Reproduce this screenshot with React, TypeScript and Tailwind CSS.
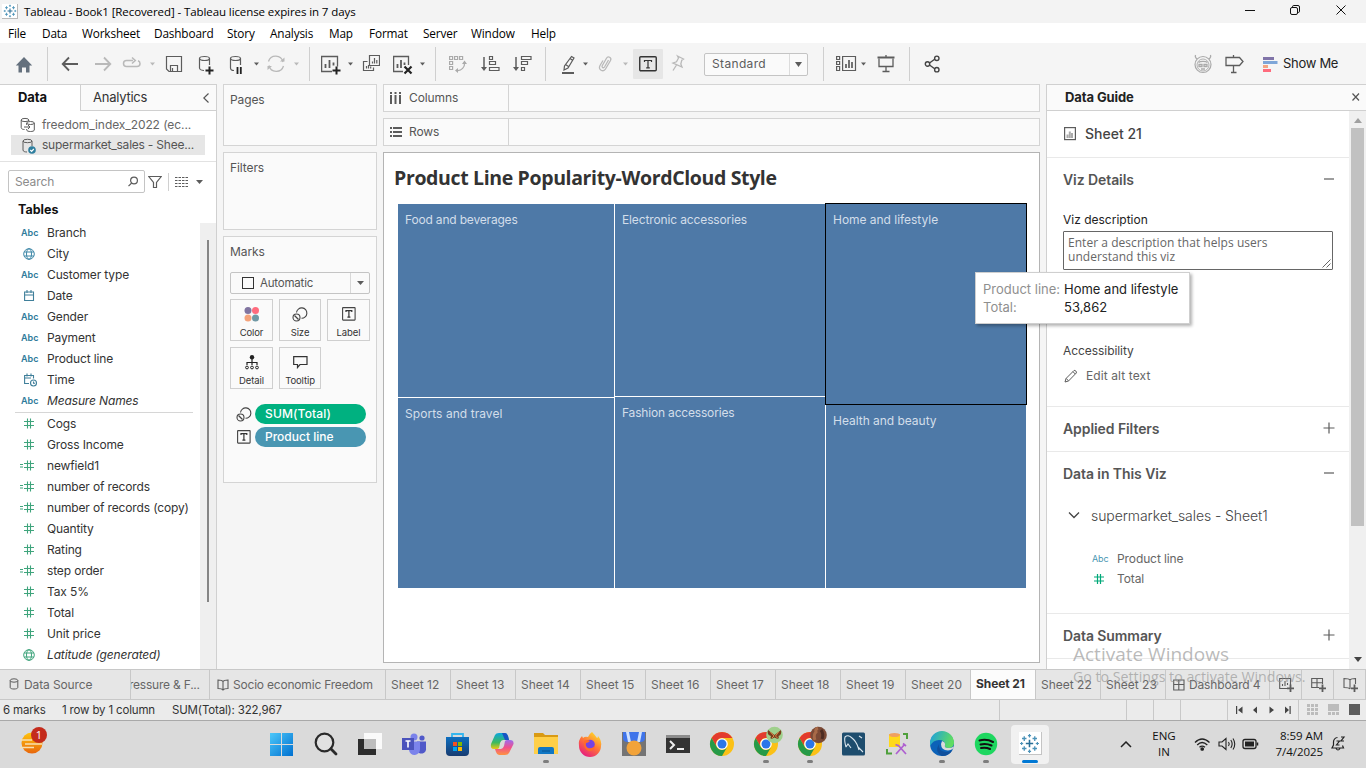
import React from "react";

const SEGOE = "font-['Open_Sans','Noto_Sans',sans-serif]";

function Svg({ w, h = 24, c = "", children }: { w: number; h?: number; c?: string; children: React.ReactNode }) {
  return (
    <svg width={w} height={h} viewBox={`0 0 ${w} ${h}`} className={`shrink-0 ${c}`} fill="none" stroke="#5c5c5c" strokeWidth={1.2}>
      {children}
    </svg>
  );
}

function Caret({ c, color = "#5c5c5c" }: { c: string; color?: string }) {
  return (
    <svg width="5" height="4" viewBox="0 0 5 4" className={`shrink-0 ${c}`}>
      <path d="M0 0.5H5L2.5 3.5Z" fill={color} />
    </svg>
  );
}

const Sep = ({ c }: { c: string }) => <div className={`h-[34px] w-px shrink-0 bg-[#cfcfcf] ${c}`} />;

function Spark({ size }: { size: number }) {
  return (
    <svg width={size} height={size} viewBox="0 0 16 16" className="shrink-0" fill="none" stroke="#4b92b8" strokeWidth="1">
      <path d="M8 5.2V10.8M5.2 8H10.8" stroke="#2a6f97" strokeWidth="1.2" />
      <path d="M4 2.5V6M2.3 4.2H5.7M12 2.5V6M10.3 4.2H13.7M4 10V13.5M2.3 11.8H5.7M12 10V13.5M10.3 11.8H13.7" />
      <path d="M8 .8V3.4M6.8 2H9.2M8 12.6V15.2M6.8 14H9.2M.8 8H3.2M2 6.8V9.2M12.8 8H15.2M14 6.8V9.2" strokeWidth=".9" />
    </svg>
  );
}

function TitleBar() {
  return (
    <div className={`flex h-[23px] shrink-0 items-center bg-[#f3f3f3] ${SEGOE}`}>
      <div className="ml-[2px] flex h-[15px] w-[16px] items-center justify-center border-r border-b border-[#b9b9b9] bg-white">
        <Spark size={14} />
      </div>
      <span className="ml-[6px] text-[11.5px] tracking-[-0.09px] text-black">Tableau - Book1 [Recovered] - Tableau license expires in 7 days</span>
      <svg width="106" height="12" viewBox="0 0 106 12" className="mr-[15px] ml-auto -mt-[3px]" fill="none" stroke="#111">
        <path d="M0 6.5H10" />
        <rect x="45.5" y="3.5" width="7" height="7" rx="1.5" />
        <path d="M47.5 3V2.8A1.3 1.3 0 0 1 48.8 1.5H53A1.5 1.5 0 0 1 54.5 3V7.2A1.3 1.3 0 0 1 53.2 8.5" />
        <path d="M91.5 1.5L100.5 10.5M100.5 1.5L91.5 10.5" />
      </svg>
    </div>
  );
}

const MENUS: [string, string][] = [
  ["File", "w-[34px]"], ["Data", "w-[40px]"], ["Worksheet", "w-[72px]"], ["Dashboard", "w-[73px]"], ["Story", "w-[43px]"],
  ["Analysis", "w-[59px]"], ["Map", "w-[40px]"], ["Format", "w-[54px]"], ["Server", "w-[48px]"], ["Window", "w-[60px]"], ["Help", "w-[40px]"],
];

function MenuBar() {
  return (
    <div className={`flex h-[20px] shrink-0 items-center bg-white pt-[2px] pl-[8px] text-[11.8px] tracking-[-0.15px] text-black ${SEGOE}`}>
      {MENUS.map(([m, w]) => (
        <span key={m} className={`${w} shrink-0 whitespace-nowrap`}>{m}</span>
      ))}
    </div>
  );
}

function Toolbar() {
  const lite = "#b9b9b9";
  return (
    <div className="flex h-[41px] shrink-0 items-center bg-[#f5f5f5] pt-px">
      <Svg w={20} c="ml-[14px]">
        <path d="M10 5L1.8 13.5H4.5V20.5H8V15.5H12V20.5H15.5V13.5H18.2Z" fill="#64707d" stroke="none" />
      </Svg>
      <Sep c="ml-[13px]" />
      <Svg w={18} c="ml-[13px]"><path d="M17 12H2M8 5.500L1.700 12L8 18.500" strokeWidth="1.800" /></Svg>
      <Svg w={18} c="ml-[15px]"><path d="M1 12H16M10 5.500L16.300 12L10 18.500" stroke={lite} strokeWidth="1.800" /></Svg>
      <Svg w={20} c="ml-[10px]">
        <path d="M11 8.500H4.500A3 3 0 0 0 1.500 11.500A3 3 0 0 0 4.500 14.500H15A3 3 0 0 0 18 11.500A3 3 0 0 0 16 8.700M10 5.500L13.300 8.500L10 11.500" stroke={lite} strokeWidth="1.500" />
      </Svg>
      <Caret c="ml-[8px]" color={lite} />
      <Svg w={18} c="ml-[10px]">
        <path d="M1.500 4.500H16.500V19.500H4L1.500 17ZM5.500 19V13.500H12.500V19M7.500 16V19" />
      </Svg>
      <Svg w={18} c="ml-[15px]">
        <ellipse cx="6.500" cy="6.500" rx="5" ry="2" />
        <path d="M1.500 6.500V16C1.500 17.500 4 18.500 6 18.500M11.500 6.500V13" />
        <path d="M11.500 14.500V22.500M7.500 18.500H15.500" stroke="#222" strokeWidth="2" />
      </Svg>
      <Svg w={18} c="ml-[13px]">
        <ellipse cx="6.500" cy="6.500" rx="5" ry="2" />
        <path d="M1.500 6.500V16C1.500 17.500 3 18.500 5 18.500M11.500 6.500V13" />
        <path d="M8.500 15V22M11.800 15V22" stroke="#222" strokeWidth="1.800" />
      </Svg>
      <Caret c="ml-[7px]" />
      <Svg w={20} c="ml-[7px]">
        <path d="M2.500 9.500A7.500 7.500 0 0 1 17 10M17.500 14A7.500 7.500 0 0 1 3 13.500" stroke={lite} strokeWidth="1.300" />
        <path d="M14 9.500H18.500V5.500ZM6 14H1.500V18Z" fill={lite} stroke="none" />
      </Svg>
      <Caret c="ml-[8px]" color={lite} />
      <Sep c="ml-[10px]" />
      <Svg w={20} c="ml-[11px]">
        <path d="M11 19.500H.6V4.500H16.500V14.500" strokeWidth="1.300" />
        <path d="M4.500 16V12M8.500 16V8M12.500 13.500V10.500" strokeWidth="1.800" />
        <path d="M15.500 14.500V22.500M11.500 18.500H19.500" stroke="#222" strokeWidth="2" />
      </Svg>
      <Caret c="ml-[7px]" />
      <Svg w={18} c="ml-[9px]">
        <path d="M7.500 3.500H17.500V13.500H7.500ZM5.500 9.500H1.500V18.500H11.500V15.500M10.500 11.500V9.500M12.500 11.500V6M14.800 11.500V8M4.500 16.500V14M6.500 16.500V13M8.700 16.500V14.500" />
      </Svg>
      <Svg w={21} c="ml-[13px]">
        <path d="M10 19.500H.6V4.500H15.500V13" strokeWidth="1.300" />
        <path d="M4.500 16V12M8 16V8M11.500 13V10.500" strokeWidth="1.800" />
        <path d="M11.500 14.500L18.500 21.500M18.500 14.500L11.500 21.500" stroke="#222" strokeWidth="2.200" />
      </Svg>
      <Caret c="ml-[6px]" />
      <Sep c="ml-[10px]" />
      <Svg w={19} c="ml-[13px]">
        <path d="M.6 4.500H3.600V7.500H.6ZM5.600 4.500H8.600V7.500H5.600ZM10.600 4.500H13.600V7.500H10.600ZM.6 9.500H3.600V12.500H.6ZM.6 14.500H3.600V17.500H.6ZM15.500 11C16 15 12.500 19 8 18.500" stroke="#aaa" />
        <path d="M15.500 8.500L18 12H13ZM6 18.500L9 16V21Z" fill="#aaa" stroke="none" />
      </Svg>
      <Svg w={20} c="ml-[13px]">
        <path d="M3 5V17" strokeWidth="1.500" /><path d="M0 15H6L3 19Z" fill="#5c5c5c" stroke="none" />
        <path d="M8.500 4.500H11.500V7.500H8.500ZM8.500 9.500H14.500V12.500H8.500ZM8.500 15.500H18V18.500H8.500Z" />
      </Svg>
      <Svg w={20} c="ml-[12px]">
        <path d="M3 5V17" strokeWidth="1.500" /><path d="M0 15H6L3 19Z" fill="#5c5c5c" stroke="none" />
        <path d="M8.500 4.500H18V7.500H8.500ZM8.500 9.500H14.500V12.500H8.500ZM8.500 15.500H11.500V18.500H8.500Z" />
      </Svg>
      <Sep c="ml-[12px]" />
      <Svg w={16} c="ml-[15px]">
        <path d="M10.500 4.500L13 6L7 16L3 18L3.500 14ZM4.500 12.500L7.500 14.500M9 6.500L12 8.500" />
        <path d="M1 21H13" strokeWidth="2" />
      </Svg>
      <Caret c="ml-[6px]" />
      <Svg w={16} c="ml-[10px]">
        <path d="M10.500 8L6.500 15C5.500 16.500 3.500 15.500 4.200 13.700L8.500 6.200C10 3.500 14 5.500 12.500 8.500L7.500 17C5.500 20.500 -.5 18 2 13.500L5 8.500" stroke={lite} strokeWidth="1.300" />
      </Svg>
      <Caret c="ml-[9px]" color={lite} />
      <div className="ml-[5px] flex h-[30px] w-[30px] shrink-0 items-center justify-center rounded-[1px] bg-[#e6e6e6]">
        <Svg w={18} h={16}>
          <rect x=".75" y=".75" width="16.500" height="14" rx="1" stroke="#333" strokeWidth="1.400" />
          <path d="M5.500 6V4.500H12.500V6M9 4.500V11.800M7.200 11.800H10.800" stroke="#333" />
        </Svg>
      </div>
      <Svg w={16} c="ml-[7px]">
        <path d="M7.500 4L13.500 7L11.800 8.200L10.800 12L12 15L3 11L6.500 9.800L8.500 6ZM6.500 13L3 18.500" stroke={lite} strokeWidth="1.300" />
      </Svg>
      <div className="ml-[18px] flex h-[23px] w-[104px] shrink-0 items-center rounded-[2px] border border-[#c4c4c4] bg-[#fafafa]">
        <span className="w-[84px] pl-[7px] text-[12px] tracking-[0.35px] text-[#5c5c5c]">Standard</span>
        <div className="flex h-full grow items-center justify-center border-l border-[#dcdcdc]">
          <svg width="7" height="5" viewBox="0 0 7 5"><path d="M0 0H7L3.500 5Z" fill="#5c5c5c" /></svg>
        </div>
      </div>
      <Sep c="ml-[15px]" />
      <Svg w={21} c="ml-[12px]">
        <path d="M.6 4.500H3.600V7.500H.6ZM.6 9.500H3.600V12.500H.6ZM.6 14.500H3.600V18.500H.6ZM6.600 4.500H19.500V18.500H6.600Z" />
        <path d="M10 16V12M13 16V8M16 16V10" strokeWidth="1.700" />
      </Svg>
      <Caret c="ml-[4px]" />
      <Svg w={18} c="ml-[11px]">
        <path d="M9 3V5M2 6.500V14.500H16V6.500M9 14.500V19M5.500 19.500H12.500" strokeWidth="1.300" /><path d="M.5 5.500H17.500" strokeWidth="2" />
      </Svg>
      <Sep c="ml-[14px]" />
      <Svg w={17} c="ml-[14px]">
        <path d="M5.500 11L11 7M5.500 13L11 17" stroke="#444" strokeWidth="1.400" />
        <circle cx="3.500" cy="12" r="2.200" stroke="#444" strokeWidth="1.400" /><circle cx="12.800" cy="6.300" r="2.200" stroke="#444" strokeWidth="1.400" /><circle cx="12.800" cy="17.700" r="2.200" stroke="#444" strokeWidth="1.400" />
      </Svg>
      <Svg w={20} c="ml-[252px]">
        <g stroke="#aaa">
          <circle cx="10" cy="12.500" r="8" /><circle cx="10" cy="13" r="6" strokeWidth=".9" />
          <path d="M4 7C2.500 6 2 4.500 2.500 3M16 7C17.500 6 18 4.500 17.500 3M5.500 10.500C7 9 13 9 14.500 10.500" />
          <path d="M6 12.500H9V14.500H6ZM11 12.500H14V14.500H11ZM8 17H12" strokeWidth="1.300" />
        </g>
      </Svg>
      <Svg w={20} c="ml-[12px]">
        <path d="M8.500 3V5M8.500 13.500V20.500M6 20.500H11.500M1 5.500H14.500L18 9.500L14.500 13.500H1Z" strokeWidth="1.300" />
      </Svg>
      <svg width="15" height="15" viewBox="0 0 15 15" className="ml-[18px] shrink-0">
        <path d="M0 0H11V3H0Z" fill="#8074a8" /><path d="M0 4H14.500V7H0Z" fill="#7ea6d8" /><path d="M0 8H5V11H0Z" fill="#f4a582" /><path d="M0 12H8V15H0Z" fill="#ff6b7d" />
      </svg>
      <span className="ml-[5px] text-[13px] tracking-[-0.3px] whitespace-nowrap text-[#222]">Show Me</span>
    </div>
  );
}

function FieldIcon({ t }: { t: string }) {
  if (t === "abc") return <span className="text-[9px] font-semibold text-[#2f7b9b]">Abc</span>;
  if (t === "globe" || t === "geo") {
    return (
      <svg width="12" height="12" viewBox="0 0 12 12" className="ml-[2px]" fill="none" stroke={t === "geo" ? "#3fa47c" : "#3f88a8"}>
        <circle cx="6" cy="6" r="5.300" /><ellipse cx="6" cy="6" rx="2.500" ry="5.300" /><path d="M1.200 4H10.800M1.200 8H10.800" />
      </svg>
    );
  }
  if (t === "date" || t === "time") {
    return (
      <svg width="14" height="14" viewBox="0 0 14 14" className="ml-[3px]" fill="none" stroke="#3f7f9a" strokeWidth="1.100">
        {t === "date" ? <path d="M.6 3H9.500V11.500H.6ZM.6 6H9.500M3 1V4M7 1V4" /> : <><path d="M5 10.500H.6V2.500H9.500V5.500M.6 5H7M3 .5V3.500M7 .5V3.500" /><circle cx="9.500" cy="10" r="3" /><path d="M9.500 8.500V10.300H11" /></>}
      </svg>
    );
  }
  return (
    <svg width="16" height="11" viewBox="0 0 16 11" className="-ml-[1px]" fill="none" stroke="#3fa47c" strokeWidth="1.100">
      {t === "calc" && <path d="M0 4.500H3M0 7H3" />}
      <path d="M7.500 .5V10.500M10.500 .5V10.500M4 3.500H14M4 7.500H14" />
    </svg>
  );
}

const DIMS: [string, string][] = [
  ["abc", "Branch"], ["globe", "City"], ["abc", "Customer type"], ["date", "Date"], ["abc", "Gender"], ["abc", "Payment"], ["abc", "Product line"], ["time", "Time"], ["abc", "Measure Names"],
];
const MEAS: [string, string][] = [
  ["num", "Cogs"], ["num", "Gross Income"], ["calc", "newfield1"], ["calc", "number of records"], ["calc", "number of records (copy)"], ["num", "Quantity"],
  ["num", "Rating"], ["calc", "step order"], ["num", "Tax 5%"], ["num", "Total"], ["num", "Unit price"], ["geo", "Latitude (generated)"],
];

function Field({ t, name }: { t: string; name: string }) {
  const it = name === "Measure Names" || name === "Latitude (generated)";
  return (
    <div className="flex h-[21px] shrink-0 items-center pl-[21px]">
      <div className="flex w-[26px] items-center"><FieldIcon t={t} /></div>
      <span className={`text-[12px] tracking-[-0.14px] whitespace-nowrap text-[#333] ${it ? "italic" : ""}`}>{name}</span>
    </div>
  );
}

function DataPane() {
  return (
    <div className="flex w-[217px] shrink-0 flex-col overflow-hidden border-r border-[#d0d0d0] bg-white">
      <div className="flex h-[27px] shrink-0 border-t border-[#d0d0d0]">
        <div className="flex w-[80px] items-center pl-[18px] text-[13px] font-bold tracking-[-0.1px] text-[#111]">Data</div>
        <div className="flex grow items-center border-b border-l border-[#d0d0d0] bg-[#fafafa] pl-[12px] text-[13px] tracking-[-0.25px] text-[#333]">
          Analytics
          <svg width="6" height="10" viewBox="0 0 6 10" className="mr-[7px] ml-auto" fill="none" stroke="#555" strokeWidth="1.200"><path d="M5.500 .5L.8 5L5.500 9.500" /></svg>
        </div>
      </div>
      <div className="mt-[4px] ml-[11px] flex h-[20px] w-[194px] shrink-0 items-center text-[12px] text-[#666]">
        <Svg w={16} h={16} c="ml-[9px]">
          <ellipse cx="5" cy="3" rx="3.800" ry="1.600" strokeWidth="1" /><path d="M1.200 3V10.500C1.200 12 3 12.500 4.500 12.500M8.800 3V4" strokeWidth="1" />
          <ellipse cx="10.500" cy="6" rx="3.800" ry="1.500" strokeWidth="1" /><path d="M6.700 6V8M14.300 6V13C14.300 15 6.700 15 6.700 13V12M4 10H10M8 8L10 10L8 12" strokeWidth="1" />
        </Svg>
        <span className="ml-[6px] tracking-[-0.08px]">freedom_index_2022 (ec...</span>
      </div>
      <div className="ml-[11px] flex h-[20px] w-[194px] shrink-0 items-center bg-[#e6e6e6] text-[12px] text-[#555]">
        <Svg w={16} h={16} c="mt-[1px] ml-[9px]">
          <ellipse cx="7.500" cy="3" rx="4.500" ry="1.700" strokeWidth="1" /><path d="M3 3V12C3 13.500 5 14 7 14M12 3V8" strokeWidth="1" />
          <circle cx="12" cy="12" r="3.800" fill="#2f7f9f" stroke="none" /><path d="M10.300 12L11.600 13.300L13.800 11" stroke="#fff" />
        </Svg>
        <span className="ml-[6px] tracking-[-0.22px] whitespace-nowrap">supermarket_sales - Shee...</span>
      </div>
      <div className="mt-[6px] h-px shrink-0 bg-[#e2e2e2]" />
      <div className="mt-[8px] flex h-[23px] shrink-0 items-center pl-[8px]">
        <div className="flex h-[23px] w-[137px] items-center rounded-[2px] border border-[#c4c4c4] pl-[6px] text-[12px] tracking-[-0.1px] text-[#8b8b8b]">
          Search
          <Svg w={10} h={11} c="mr-[6px] ml-auto"><circle cx="6" cy="4.500" r="3.400" /><path d="M3.700 7L.5 10.200" /></Svg>
        </div>
        <Svg w={14} h={14} c="ml-[3px]"><path d="M.8 1.500H13.200L8.500 7.500V12.500H5.500V7.500Z" /></Svg>
        <div className="ml-[6px] h-[18px] w-px bg-[#d0d0d0]" />
        <Svg w={13} h={10} c="ml-[6px]"><path d="M0 .5H13M0 3.500H13M0 6.500H13M0 9.500H13" strokeDasharray="2.500 1" strokeWidth="1" /></Svg>
        <svg width="7" height="4" viewBox="0 0 7 4" className="ml-[8px]"><path d="M0 0H7L3.500 4Z" fill="#5c5c5c" /></svg>
      </div>
      <div className="mt-[7px] h-[22px] shrink-0 pl-[18px] text-[12.5px] leading-[19px] font-bold text-[#111]">Tables</div>
      <div className="flex min-h-0 grow">
        <div className="flex w-[200px] shrink-0 flex-col overflow-hidden">
          {DIMS.map(([t, n]) => <Field key={n} t={t} name={n} />)}
          <div className="mt-px ml-[15px] h-px w-[178px] shrink-0 bg-[#d6d6d6]" />
          {MEAS.map(([t, n]) => <Field key={n} t={t} name={n} />)}
        </div>
        <div className="mt-px grow bg-[#efefef] pt-[17px] pl-[7px]"><div className="h-[362px] w-[2px] bg-[#858585]" /></div>
      </div>
    </div>
  );
}

function SizeIcon() {
  return <Svg w={16} h={15}><path d="M4.500 5.500A5.200 5.200 0 1 1 9.500 11.300" stroke="#444" strokeWidth="1.100" /><circle cx="4.500" cy="10.500" r="3.500" stroke="#444" strokeWidth="1.100" /><path d="M2.500 8.500L6.500 12.500" stroke="#444" /></Svg>;
}
function TextIcon() {
  return <Svg w={14} h={14}><rect x=".6" y=".6" width="12.500" height="12.500" rx=".5" stroke="#444" strokeWidth="1.100" /><path d="M4 5V3.700H9.800V5M6.900 3.700V10M5.400 10.200H8.400" stroke="#333" /></Svg>;
}

function MarkButton({ label, children }: { label: string; children: React.ReactNode }) {
  return (
    <div className="flex h-[42px] flex-col items-center border border-[#cfcfcf] bg-[#fafafa]">
      <div className="mt-[6px] flex h-[16px] items-center">{children}</div>
      <span className="mt-[4px] text-[9.500px] leading-[13px] tracking-[-0.1px] text-[#333]">{label}</span>
    </div>
  );
}

function Cards() {
  const card = "shrink-0 border border-[#d4d4d4] bg-[#fafafa] px-[6px] text-[12px] tracking-[-0.1px] text-[#555]";
  return (
    <div className="flex w-[166px] shrink-0 flex-col gap-[6px] pr-[6px] pl-[6px]">
      <div className={`${card} h-[62px] pt-[6px]`}>Pages</div>
      <div className={`${card} h-[78px] pt-[6px]`}>Filters</div>
      <div className={`${card} h-[247px] pt-[6px]`}>
        Marks
        <div className="mt-[11px] flex h-[22px] items-center rounded-[2px] border border-[#c4c4c4] bg-[#fafafa]">
          <div className="ml-[11px] h-[12px] w-[12px] border border-[#333]" />
          <span className="ml-[6px] w-[90px] pt-px text-[11.500px] tracking-[-0.2px]">Automatic</span>
          <div className="flex h-full grow items-center justify-center border-l border-[#d8d8d8]">
            <svg width="7" height="4" viewBox="0 0 7 4"><path d="M0 0H7L3.500 4Z" fill="#5c5c5c" /></svg>
          </div>
        </div>
        <div className="mt-[5px] grid grid-cols-[43px_42px_43px] gap-[6px]">
          <MarkButton label="Color">
            <svg width="16" height="16" viewBox="0 0 16 16"><circle cx="4" cy="4.500" r="3.500" fill="#8074a0" /><circle cx="11.500" cy="4.500" r="3.500" fill="#ff6b7d" /><circle cx="4" cy="12" r="3.500" fill="#f4a27a" /><circle cx="11.500" cy="12" r="3.500" fill="#7099a5" /></svg>
          </MarkButton>
          <MarkButton label="Size"><SizeIcon /></MarkButton>
          <MarkButton label="Label"><TextIcon /></MarkButton>
          <MarkButton label="Detail">
            <Svg w={14} h={15} c="mt-px"><circle cx="7" cy="2.300" r="2.200" fill="#222" stroke="none" /><path d="M7 4V10M2 10V7.500H12V10" stroke="#222" /><circle cx="2" cy="12.500" r="1.400" stroke="#222" strokeWidth="1" /><circle cx="7" cy="12.500" r="1.400" stroke="#222" strokeWidth="1" /><circle cx="12" cy="12.500" r="1.400" stroke="#222" strokeWidth="1" /></Svg>
          </MarkButton>
          <MarkButton label="Tooltip">
            <Svg w={15} h={14}><path d="M.7 1.600H14V9.500H7L4.500 12.500V9.500H.7Z" stroke="#333" /></Svg>
          </MarkButton>
        </div>
        <div className="mt-[15px] flex items-center pl-[6px] text-[12px] font-medium tracking-normal text-white">
          <SizeIcon /><div className="ml-[3px] h-[20px] w-[111px] rounded-full bg-[#00b180] pl-[10px] leading-[20px] tracking-[0.15px]">SUM(Total)</div>
        </div>
        <div className="mt-[3px] flex items-center pl-[7px] text-[12px] font-medium tracking-normal text-white">
          <TextIcon /><div className="ml-[4px] h-[20px] w-[111px] rounded-full bg-[#4996b2] pl-[10px] leading-[20px]">Product line</div>
        </div>
      </div>
    </div>
  );
}

function Shelf({ label, children }: { label: string; children: React.ReactNode }) {
  return (
    <div className="flex h-[28px] shrink-0 items-center border border-[#d4d4d4] bg-[#fafafa]">
      <div className="flex h-full w-[125px] items-center border-r border-[#d4d4d4] pl-[6px] text-[12px] tracking-[-0.1px] text-[#555]">
        <svg width="13" height="13" viewBox="0 0 13 13" className="mr-[6px]" fill="none" stroke="#5c5c5c" strokeWidth="2">{children}</svg>
        {label}
      </div>
    </div>
  );
}

const Cell = ({ c, children }: { c: string; children: React.ReactNode }) => (
  <div className={`bg-[#4e79a7] pl-[7px] text-[12px] leading-[18px] text-[#d3deea] ${c}`}>{children}</div>
);

function Canvas() {
  return (
    <div className="flex w-[657px] shrink-0 flex-col gap-[6px]">
      <Shelf label="Columns"><path d="M1 0V2M1 3V12M5.500 0V2M5.500 3V12M10 0V2M10 3V12" /></Shelf>
      <Shelf label="Rows"><path d="M0 2H2M3 2H12M0 6H2M3 6H12M0 10H2M3 10H12" /></Shelf>
      <div className="h-[511px] border border-[#b4b4b4] bg-white">
        <div className={`h-[51px] pt-[10px] pl-[10px] text-[19.500px] leading-[30px] font-bold tracking-[-0.36px] whitespace-nowrap text-[#333] ${SEGOE}`}>Product Line Popularity-WordCloud Style</div>
        <div className="ml-[14px] grid h-[384px] w-[628px] grid-cols-[216px_210px_200px] gap-x-px">
          <div className="flex flex-col gap-px"><Cell c="h-[193px] pt-[7px] tracking-[-0.18px]">Food and beverages</Cell><Cell c="grow pt-[7px] tracking-[0.06px]">Sports and travel</Cell></div>
          <div className="flex flex-col gap-px"><Cell c="h-[192px] pt-[7px] tracking-[-0.13px]">Electronic accessories</Cell><Cell c="grow pt-[7px] tracking-[-0.18px]">Fashion accessories</Cell></div>
          <div className="flex flex-col">
            <Cell c="relative z-10 h-[200px] pt-[7px] tracking-[-0.03px] outline outline-black">Home and lifestyle</Cell><Cell c="grow pt-[8px] tracking-[-0.03px]">Health and beauty</Cell>
          </div>
        </div>
      </div>
    </div>
  );
}

const Plus = () => <Svg w={12} h={12}><path d="M6 .5V11.500M.5 6H11.500" strokeWidth="1.200" /></Svg>;
const Minus = () => <Svg w={12} h={12}><path d="M1 6H11" strokeWidth="1.200" /></Svg>;

function Head({ label, open }: { label: string; open?: boolean }) {
  return (
    <div className="flex h-[44px] shrink-0 items-center pr-[14px] pb-[2px] pl-[16px] text-[14px] font-semibold tracking-[-0.08px] text-[#555]">
      <span className="grow">{label}</span>
      {open ? <Minus /> : <Plus />}
    </div>
  );
}

function Guide() {
  return (
    <div className="ml-[6px] flex grow flex-col border-l border-[#d0d0d0] bg-white">
      <div className="flex h-[27px] shrink-0 items-center border-t border-b border-[#d0d0d0] bg-[#fafafa] pl-[18px] text-[13px] font-bold tracking-[-0.1px] text-[#222]">
        Data Guide
        <svg width="8" height="8" viewBox="0 0 8 8" className="mt-[-2px] mr-[6px] ml-auto" stroke="#555" strokeWidth="1.200"><path d="M.5 .5L7 7.500M7 .5L.5 7.500" /></svg>
      </div>
      <div className="flex min-h-0 grow">
        <div className="flex w-[302px] shrink-0 flex-col overflow-hidden">
          <div className="flex h-[47px] shrink-0 items-center border-b border-[#e9e9e9] pb-px pl-[17px] text-[14px] font-medium text-[#444]">
            <Svg w={12} h={14}><rect x=".6" y=".6" width="10.800" height="12" /><path d="M3.500 11V7.500M5.800 11V4.500M8 11V6" stroke="#aaa" strokeWidth="2" /></Svg>
            <span className="ml-[9px] pb-px">Sheet 21</span>
          </div>
          <Head label="Viz Details" open />
          <div className="mt-[9px] h-[20px] pl-[16px] text-[12px] leading-[18px] text-[#222]">Viz description</div>
          <div className={`relative ml-[16px] h-[39px] w-[270px] shrink-0 rounded-[1px] border border-[#666] pt-[4px] pl-[4px] text-[12px] leading-[14px] tracking-[0.04px] text-[#666] ${SEGOE}`}>
            Enter a description that helps users<br />understand this viz
            <svg width="9" height="9" viewBox="0 0 9 9" className="absolute right-px bottom-px" stroke="#555" strokeWidth=".9"><path d="M.5 8.500L8.500 .5M4.500 8.500L8.500 4.500" /></svg>
          </div>
          <div className="mt-[72px] h-[18px] pl-[16px] text-[12px] leading-[18px] tracking-[-0.06px] text-[#444]">Accessibility</div>
          <div className="mt-[6px] flex h-[20px] items-center pl-[17px] text-[12px] text-[#666]">
            <Svg w={14} h={14}><path d="M1 13L2 9.500L10 1.500C11 .7 13.200 3 12.300 4L4.500 12L1 13M2.200 9.500L4.500 11.800M9 2.700L11.300 5" strokeWidth="1" /></Svg>
            <span className="ml-[8px] tracking-[0.1px]">Edit alt text</span>
          </div>
          <div className="mt-[20px] h-px shrink-0 bg-[#e9e9e9]" />
          <Head label="Applied Filters" />
          <div className="h-px shrink-0 bg-[#e9e9e9]" />
          <Head label="Data in This Viz" open />
          <div className="mt-[9px] flex h-[20px] shrink-0 items-center pl-[21px] text-[14px] font-light text-[#444]">
            <Svg w={12} h={8}><path d="M1 1.500L6 6.500L11 1.500" stroke="#444" strokeWidth="1.300" /></Svg>
            <span className="ml-[11px] tracking-[-0.08px]">supermarket_sales - Sheet1</span>
          </div>
          <div className="mt-[24px] flex h-[20px] shrink-0 items-center pl-[45px] text-[12px] tracking-[-0.1px] text-[#666]">
            <span className="w-[25px] text-[9px] text-[#4996b2]">Abc</span>Product line
          </div>
          <div className="flex h-[20px] shrink-0 items-center pl-[47px] text-[12px] tracking-[-0.1px] text-[#666]">
            <svg width="11" height="11" viewBox="0 0 11 11" className="mr-[12px]" stroke="#00a878" strokeWidth="1.200"><path d="M3.500 0V10M6.500 0V10M0 3H10M0 7H10" /></svg>Total
          </div>
          <div className="mt-[24px] h-px shrink-0 bg-[#e9e9e9]" />
          <Head label="Data Summary" />
          <div className="h-px shrink-0 bg-[#e9e9e9]" />
        </div>
        <div className="flex grow flex-col items-center bg-[#f0f0f0]">
          <svg width="8" height="5" viewBox="0 0 8 5" className="mt-[7px]"><path d="M0 5H8L4 0Z" fill="#a0a0a0" /></svg>
          <div className="mt-[5px] h-[398px] w-[13px] shrink-0 bg-[#c1c1c1]" />
          <svg width="8" height="5" viewBox="0 0 8 5" className="mt-auto mb-[7px]"><path d="M0 0H8L4 5Z" fill="#444" /></svg>
        </div>
      </div>
    </div>
  );
}

function Tab({ w, children, active }: { w: string; children: React.ReactNode; active?: boolean }) {
  return (
    <div className={`flex shrink-0 items-center overflow-hidden border-r border-[#c8c8c8] text-[12px] whitespace-nowrap ${w} ${active ? "bg-[#fcfcfc] pb-[2px] font-bold tracking-[-0.1px] text-[#333]" : "text-[#666]"}`}>{children}</div>
  );
}

const SHEETS = [12, 13, 14, 15, 16, 17, 18, 19, 20, 21, 22, 23];

function SheetTabs() {
  return (
    <div className="flex h-[31px] shrink-0 border-t border-b border-[#c8c8c8] bg-[#e6e6e6]">
      <Tab w="w-[131px] pl-[9px] tracking-[-0.12px]">
        <Svg w={10} h={12} c="mr-[5px] mb-[2px]"><ellipse cx="5" cy="2.500" rx="3.800" ry="1.700" strokeWidth="1" /><path d="M1.200 2.500V9.500C1.200 11.500 8.800 11.500 8.800 9.500V2.500" strokeWidth="1" /></Svg>Data Source
      </Tab>
      <Tab w="w-[79px] tracking-[-0.22px]"><span className="-ml-[2px]">ressure &amp; F...</span></Tab>
      <Tab w="w-[176px] pl-[7px] tracking-[-0.2px]">
        <Svg w={12} h={12} c="mr-[4px]"><path d="M6 2.500C5 1 3 1 1 1V9.500C3 9.500 5 9.500 6 11C7 9.500 9 9.500 11 9.500V1C9 1 7 1 6 2.500V11" strokeWidth="1.100" /></Svg>Socio economic Freedom
      </Tab>
      {SHEETS.map((n) => <Tab key={n} w="w-[65px] pl-[5px]" active={n === 21}>Sheet {n}</Tab>)}
      <Tab w="w-[104px] pl-[7px] tracking-[-0.15px]">
        <Svg w={12} h={12} c="mr-[4px]"><path d="M.7 1H11V11H.7ZM.7 5.500H11M5.800 1V11" strokeWidth="1.100" /></Svg>Dashboard 4
      </Tab>
      <Tab w="w-[32px] pl-[9px]"><Svg w={16} h={16}><path d="M9 11.500H.7V1.500H11.500V8M3.500 9V7M6 9V4M8.500 8V6" strokeWidth="1.100" /><path d="M11.500 7.500V15M8 11.300H15" strokeWidth="1.800" /></Svg></Tab>
      <Tab w="w-[32px] pl-[9px]"><Svg w={16} h={16}><path d="M8 10.500H.7V1.500H11.500V7M.7 5.800H11.500M6 1.500V10.500" strokeWidth="1.100" /><path d="M11.500 7.500V15M8 11.300H15" strokeWidth="1.800" /></Svg></Tab>
      <Tab w="w-[32px] pl-[9px]"><Svg w={16} h={16}><path d="M7 3C6 1.500 3 1.500 1 1.500V10.500C4 10.500 6 10.500 7 12M12.500 7V1.500C10 1.500 8 1.500 7 3V12" strokeWidth="1.100" /><path d="M11.500 7.500V15M8 11.300H15" strokeWidth="1.800" /></Svg></Tab>
    </div>
  );
}

function StatusBar() {
  return (
    <div className="flex h-[21px] shrink-0 items-center border-b border-[#a9a9a9] bg-[#ebebeb] text-[11.500px] tracking-[-0.16px] whitespace-nowrap text-[#333]">
      <span className="w-[59px] shrink-0 pt-px pl-[3px]">6 marks</span>
      <span className="w-[113px] shrink-0 pt-px pl-[3px]">1 row by 1 column</span>
      <span className="w-[827px] shrink-0 pt-px">SUM(Total): 322,967</span>
      <div className="h-full w-[127px] border-l border-[#c8c8c8]" />
      <div className="h-full w-[27px] border-l border-[#c8c8c8]" />
      <div className="h-full w-[27px] border-l border-[#c8c8c8]" />
      <div className="h-full w-[47px] border-l border-[#c8c8c8]" />
      <div className="flex h-full w-[71px] items-center border-l border-[#c8c8c8] pl-[8px]">
        <svg width="55" height="8" viewBox="0 0 55 8" fill="#444" className="-mt-px"><path d="M0 0H1.200V8H0ZM6.500 .5V7.500L2 4ZM21 .5V7.500L17 4ZM33.500 .5V7.500L38 4ZM49 .5V7.500L53 4ZM53.500 0H54.700V8H53.500Z" /></svg>
      </div>
      <div className="flex h-full w-[67px] items-center border-l border-[#c8c8c8] pl-[8px]">
        <svg width="54" height="12" viewBox="0 0 54 12" className="-mt-px">
          <path d="M0 0H3V3H0ZM4 0H7V3H4ZM8 0H11V3H8ZM0 4H3V7H0ZM4 4H7V7H4ZM8 4H11V7H8ZM0 8H3V11H0ZM4 8H7V11H4ZM8 8H11V11H8ZM21 0H32V7H21ZM21 8H24V11H21ZM25 8H28V11H25ZM29 8H32V11H29Z" fill="#bcbcbc" />
          <path d="M42 0H53V11H42Z" fill="#5c5c5c" />
        </svg>
      </div>
    </div>
  );
}

function Chrome() {
  return (
    <>
      <circle cx="12" cy="12" r="12" fill="#fbc116" />
      <path d="M1.600 6A12 12 0 0 1 22.400 6H12A6 6 0 0 0 6.800 15Z" fill="#e33b2e" />
      <path d="M1.600 6A12 12 0 0 0 12 24L17.200 15A6 6 0 0 1 6.800 15Z" fill="#269a48" />
      <circle cx="12" cy="12" r="5.800" fill="#fff" /><circle cx="12" cy="12" r="4.500" fill="#2b76e8" />
    </>
  );
}

const APPS: { id: string; dot?: boolean; art: React.ReactNode }[] = [
  { id: "start", art: <><linearGradient id="win" x1="0" y1="0" x2="1" y2="1"><stop stopColor="#4cc8fa" /><stop offset="1" stopColor="#0070d0" /></linearGradient><path d="M0 1H11V12H0ZM12 1H23V12H12ZM0 13H11V24H0ZM12 13H23V24H12Z" fill="url(#win)" /></> },
  { id: "search", art: <><circle cx="10.500" cy="10.500" r="8.800" fill="#e8e8e8" fillOpacity=".5" stroke="#2a2a2a" strokeWidth="2.200" /><path d="M16.800 16.800L22 22" stroke="#2a2a2a" strokeWidth="2.800" strokeLinecap="round" /></> },
  { id: "view", art: <><path d="M0 7H18V23H0Z" fill="#2d2d2d" /><path d="M6 1H24V17H6Z" fill="#fafafa" /><path d="M6 7H18V17H6Z" fill="#bdbdbd" /></> },
  { id: "teams", art: <><circle cx="12" cy="5" r="3.500" fill="#7b83eb" /><circle cx="20" cy="6" r="2.600" fill="#5059c9" /><path d="M15 9.500H24V16A4 4 0 0 1 15 18Z" fill="#5059c9" /><path d="M7 9.500H18V17A5.500 5.500 0 0 1 7 18Z" fill="#7b83eb" /><path d="M0 6H12V18H0Z" fill="#4b53bc" /><path d="M3.500 9H8.500M6 9V15.500" stroke="#fff" strokeWidth="1.600" /></> },
  { id: "store", art: <><path d="M6 6V2H17V6" stroke="#35b6ee" strokeWidth="1.800" fill="none" /><linearGradient id="st" x2="0" y2="1"><stop stopColor="#0e6fc0" /><stop offset="1" stopColor="#173b70" /></linearGradient><path d="M0 5H23V20Q23 24 19 24H4Q0 24 0 20Z" fill="url(#st)" /><path d="M7 10H11V14H7Z" fill="#f25022" /><path d="M12 10H16V14H12Z" fill="#7fba00" /><path d="M7 15H11V19H7Z" fill="#00a4ef" /><path d="M12 15H16V19H12Z" fill="#ffb900" /></> },
  { id: "copilot", art: <><linearGradient id="c1" x2="0" y2="1"><stop stopColor="#0aa5dd" /><stop offset=".6" stopColor="#3fba5c" /><stop offset="1" stopColor="#f2c811" /></linearGradient><linearGradient id="c2" x2="0" y2="1"><stop stopColor="#9b6cf0" /><stop offset=".5" stopColor="#f0508c" /><stop offset="1" stopColor="#ff9340" /></linearGradient><path d="M5 3Q6 1 9 1H15Q17 1 18 4L19 8H13Q11 8 10 11L9 16Q8 17.500 5 17H4Q0 17 1 12Z" fill="url(#c1)" /><path d="M12 1H15Q17 1 18 4L19 8H15Z" fill="#1754c4" /><path d="M19 21Q18 23 15 23H9Q7 23 6 20L5 17H11Q13 17 14 14L15 9Q16 7.500 19 8H20Q24 8 23.500 12Z" fill="url(#c2)" /></> },
  { id: "files", dot: true, art: <><path d="M0 1H9L11 3H24V10H0Z" fill="#d99a14" /><path d="M0 5H24V22H0Z" fill="#ffcf48" /><path d="M4 22V17Q4 15 6 15H18Q20 15 20 17V22Z" fill="#1177c4" /><path d="M8 19H16" stroke="#0b5490" /></> },
  { id: "firefox", art: <><linearGradient id="ff" x1=".8" y1="0" x2=".2" y2="1"><stop stopColor="#ffe226" /><stop offset=".5" stopColor="#ff7139" /><stop offset="1" stopColor="#e31587" /></linearGradient><path d="M14 0Q17 3 19 6Q20 6 20 4Q24 9 23 14A11 11 0 0 1 1 14Q0 8 4 4L5 6Q7 4 10 5Q11 2 14 0Z" fill="url(#ff)" /><circle cx="12" cy="12.500" r="4.800" fill="#7543e3" /><path d="M6 9Q9 7 12 9Q10 11 8 11Q7 14 10 16Q15 17 17 13Q17 19 11 19Q5 17 6 9Z" fill="#ff6a2b" /></> },
  { id: "medal", art: <><path d="M0 0H24V24H0Z" fill="#747474" /><path d="M1 0H23V7Q22 10 19 10H5Q2 10 1 7Z" fill="#3f74ea" /><path d="M4 0H7L9 10H6ZM17 0H20L18 10H15Z" fill="#cfe2ff" /><circle cx="12" cy="16" r="7.500" fill="#f2a33a" /></> },
  { id: "term", art: <><path d="M0 3H24V21H0Z" fill="#333" /><path d="M0 3H24V6H0Z" fill="#8c8c8c" /><path d="M4 9L8 13L4 17M11 17H18" stroke="#eee" strokeWidth="2" fill="none" /></> },
  { id: "chrome", art: <Chrome /> },
  { id: "chrome2", dot: true, art: <><Chrome /><circle cx="20.500" cy="3" r="8.300" fill="#9fd08c" /><path d="M20.500 3L14 -2Q12.500 3 17 4Q15 8.500 20.500 5.500Q26 8.500 24.500 4Q28 3 27 -2Z" fill="#7a3d1c" /><path d="M16.500 0L20 4L18 6M24.500 0L21.500 4L23.500 6" stroke="#d98a4a" fill="none" /></> },
  { id: "chrome3", dot: true, art: <><Chrome /><circle cx="20.500" cy="3" r="8.300" fill="#7b4a36" /><path d="M17 8Q15 3 18 0Q17 -3 20 -4" stroke="#a86a48" strokeWidth="3" fill="none" /><path d="M23 -2Q26 2 24 7" stroke="#4d2c22" strokeWidth="3" fill="none" /></> },
  { id: "mysql", art: <><rect width="23" height="23" y=".5" rx="1.500" fill="#1e4d6e" /><path d="M4 15Q2 8 3 5Q6 2 10 6Q14 9 16 15L21 20M16 15L17 18M4 15L6 12L9 16M17 4L20 6" stroke="#dbe7ef" strokeWidth="1.100" fill="none" /></> },
  { id: "tools", art: <><path d="M3 2H14V15H3Z" fill="#ffd91a" /><ellipse cx="8.500" cy="3" rx="5.500" ry="2" fill="#f0a060" /><path d="M17 2H21V7M1 17V21.500H6" stroke="#4fa03c" strokeWidth="2" fill="none" /><path d="M10 22L19 12M12 13L20 22M9.500 12.500L13 14M17 11.500L20 14" stroke="#ae5fd0" strokeWidth="1.700" /></> },
  { id: "edge", dot: true, art: <><linearGradient id="ed" x2="1" y2=".3"><stop stopColor="#1b9de2" /><stop offset="1" stopColor="#5fdc62" /></linearGradient><circle cx="12" cy="12" r="12" fill="#0c62b8" /><path d="M0 11A12 12 0 0 1 24 11Q24 16 18 16Q14 16 15 13Q15 8 9 8Q3 8 0 14Z" fill="url(#ed)" /><path d="M9 12Q8 19 16 20Q20 20 22.500 18A12 12 0 0 1 12 24Q4 20 9 12Z" fill="#0f4f9c" /><path d="M12 9Q15.500 10 15 13Q14 16 18 16Q21 16 24 14.500Q23.500 18 18 18.500Q11 18 11 12Z" fill="#dadada" /></> },
  { id: "spotify", dot: true, art: <><circle cx="12" cy="12" r="11.200" fill="#1ed760" /><path d="M5.500 8.500Q12.500 6.500 19 10M6.500 12.500Q12 11 17.500 13.500M7 16Q12 15 16 17" stroke="#111" strokeWidth="2" strokeLinecap="round" fill="none" /></> },
];

function Taskbar() {
  return (
    <div className={`flex grow items-start bg-[#dadada] text-[#111] ${SEGOE}`}>
      <div className="h-[47px] w-[260px] shrink-0 pt-[4px] pl-[20px]">
        <svg width="30" height="30" viewBox="0 0 30 30">
          <linearGradient id="sun" x2="0" y2="1"><stop stopColor="#ffc50c" /><stop offset="1" stopColor="#e8660c" /></linearGradient>
          <circle cx="12" cy="18" r="10.500" fill="url(#sun)" />
          <path d="M0 15H12M5 19H22M0 22.500H14" stroke="#f7dfb0" strokeWidth="1.500" />
          <circle cx="19" cy="10" r="8" fill="#c42b1c" />
          <text x="19" y="14" textAnchor="middle" fontSize="11" fill="#fff">1</text>
        </svg>
      </div>
      {APPS.map((a) => (
        <div key={a.id} className="flex h-[47px] w-[44px] shrink-0 flex-col items-center pt-[11px]">
          <svg width="24" height="24" viewBox="0 0 24 24" className="overflow-visible">{a.art}</svg>
          {a.dot && <div className="mt-[4px] h-[3px] w-[6px] rounded-full bg-[#7d7d7d]" />}
        </div>
      ))}
      <div className="mt-[4px] ml-[3px] flex h-[39px] w-[38px] shrink-0 flex-col items-center rounded-[4px] bg-[#f1f1f1] pt-[7px]">
        <div className="flex h-[23px] w-[23px] shrink-0 items-center justify-center border-r border-b border-[#c4c4c4] bg-white"><Spark size={21} /></div>
        <div className="mt-[5px] h-[3px] w-[16px] shrink-0 rounded-full bg-[#0078d4]" />
      </div>
      <div className="ml-auto flex h-[46px] items-center">
        <svg width="12" height="7" viewBox="0 0 12 7" fill="none" stroke="#222" strokeWidth="1.500"><path d="M1 6L6 1L11 6" /></svg>
        <div className="ml-[16px] w-[32px] text-center text-[11.500px] leading-[16px]">ENG<br />IN</div>
        <svg width="65" height="16" viewBox="0 0 65 16" className="ml-[14px]" fill="none" stroke="#222" strokeWidth="1.300">
          <path d="M1 6.500Q8 -.5 15.500 6.500M3.200 9Q8 4 13.300 9M5.500 11.300Q8 9 11 11.300" /><circle cx="8.200" cy="13" r="1.200" fill="#222" />
          <path d="M25 6H28L32 2.500V13.500L28 10H25ZM34.500 6Q36 8 34.500 10M36.800 4Q39.500 8 36.800 12M39 2.500Q42.500 8 39 13.500" strokeWidth="1.100" />
          <rect x="49" y="3.500" width="13" height="9" rx="2" /><path d="M51 5.500H60V10.500H51Z" fill="#222" stroke="none" /><path d="M63.500 6.500V9.500" strokeWidth="1.500" />
        </svg>
        <div className="ml-[7px] w-[57px] text-right text-[11.500px] leading-[16px] tracking-[-0.05px] whitespace-nowrap">8:59 AM<br />7/4/2025</div>
        <svg width="15" height="16" viewBox="0 0 15 16" className="mr-[20px] ml-[8px]" fill="none" stroke="#222" strokeWidth="1.200">
          <path d="M6.500 1.500C4 1.500 2.500 4 2.500 6V9L1 12H12.500L11.500 9.500M5 12.500Q7 15.500 9 12.500M5.500 5H8.500L5.500 9H8.500M10 1H13L10 5H13" />
        </svg>
      </div>
    </div>
  );
}

export default function App() {
  return (
    <div className="relative flex h-[768px] w-[1366px] flex-col overflow-hidden bg-[#f5f5f5] font-['Inter','Open_Sans',sans-serif]">
      <TitleBar />
      <MenuBar />
      <Toolbar />
      <div className="flex h-[585px] shrink-0">
        <DataPane />
        <Cards />
        <Canvas />
        <Guide />
      </div>
      <SheetTabs />
      <StatusBar />
      <Taskbar />
      <div className="absolute top-[272px] left-[975px] z-20 grid h-[52px] w-[215px] grid-cols-[81px_1fr] content-center border border-[#cfcfcf] bg-white pl-[7px] text-[13px] leading-[18px] whitespace-nowrap shadow-[2px_2px_3px_rgba(0,0,0,0.3)]">
        <span className="text-[#8f8f8f]">Product line:</span><span className="text-[#222]">Home and lifestyle</span>
        <span className="text-[#8f8f8f]">Total:</span><span className="text-[#222]">53,862</span>
      </div>
      <div className={`absolute top-[641px] left-[1073px] whitespace-nowrap text-[#8c8c8c]/60 ${SEGOE}`}>
        <div className="text-[19px] leading-[26px]">Activate Windows</div>
        <div className="text-[14.200px] leading-[20px]">Go to Settings to activate Windows.</div>
      </div>
    </div>
  );
}
